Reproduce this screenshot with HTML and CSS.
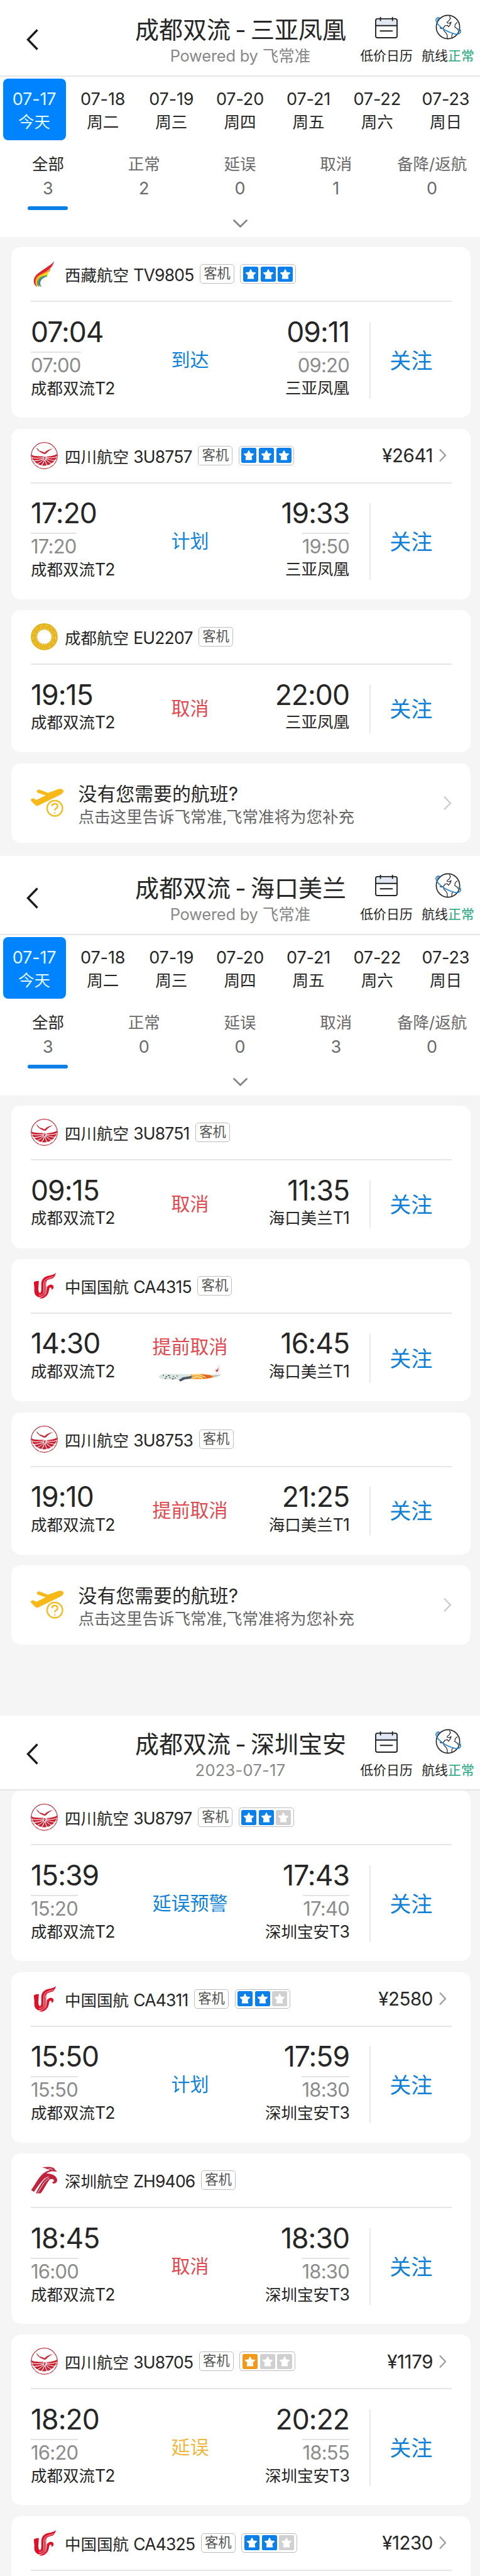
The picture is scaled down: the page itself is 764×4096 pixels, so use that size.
FILE: index.html
```html
<!DOCTYPE html>
<html lang="zh-CN">
<head>
<meta charset="utf-8">
<title>航班动态</title>
<link rel="stylesheet" href="styles.css">
</head>
<body>
<svg class="defs" aria-hidden="true">
  <symbol id="back" viewBox="0 0 20 34"><path d="M17.5 1.5 2.5 17l15 15.500" fill="none" stroke="#1c1c1c" stroke-width="3.400"/></symbol>
  <symbol id="down" viewBox="0 0 23 13"><path d="M1.500 1.500 11.500 11.300l10-9.800" fill="none" stroke="#868686" stroke-width="2.800" stroke-linecap="round"/></symbol>
  <symbol id="next" viewBox="0 0 13 22"><path d="M2 1.500 11 11 2 20.500" fill="none" stroke="currentColor" stroke-width="2.200"/></symbol>
  <symbol id="calendar" viewBox="0 0 152 144">
    <path d="M4 58V24Q4 12 16 12H136Q148 12 148 24V58Z" fill="#e2e8f3"/>
    <rect x="4" y="12" width="144" height="128" rx="12" fill="none" stroke="#222" stroke-width="8"/>
    <path d="M4 58H148M36 0V24M117 0V24M35 94H116" fill="none" stroke="#222" stroke-width="8" stroke-linecap="round"/>
  </symbol>
  <symbol id="globe" viewBox="0 0 176 168">
    <circle cx="86" cy="84" r="80" fill="#fff" stroke="#222" stroke-width="7"/>
    <path d="M96 10 104 26 98 30 94 40 82 48 80 56 98 58 108 50 100 70 90 82 82 72 64 76 54 92 38 94 30 88M54 92 58 108 74 126 80 138 82 162M112 160 112 140 122 124M150 52 136 64 132 84 150 96 156 108" fill="none" stroke="#222" stroke-width="5" stroke-linejoin="round"/>
    <path d="M26 20Q6 18 4 36C4 60 48 108 128 130Q166 138 172 116Q174 102 160 96" fill="none" stroke="#2583cf" stroke-width="7" stroke-linecap="round"/>
    <path d="M26 20Q16 24 14 42" fill="none" stroke="#2583cf" stroke-width="5"/>
  </symbol>
  <symbol id="star" viewBox="0 0 24 24"><rect width="24" height="24" rx="2.800" fill="currentColor"/><path d="m12 4.600 2.300 4.600 5.300.7-3.800 3.600.9 5.500H7.300l.9-5.500-3.800-3.600 5.300-.7Z" fill="#fff" stroke="#fff" stroke-width="1.200" stroke-linejoin="round"/></symbol>
  <symbol id="tibet" viewBox="0 0 140 176">
    <path d="M138 0C124 26 66 52 24 88C-6 116-4 152 20 172C8 132 20 110 58 86C96 66 130 42 138 0Z" fill="#dd2230"/>
    <path d="M116 50C86 74 48 82 24 104C6 124 8 152 24 174C20 136 36 112 76 92C98 80 110 70 116 50Z" fill="#f58220"/>
    <path d="M104 66C80 84 46 92 28 112C14 132 14 154 30 174C28 138 48 112 94 94C98 84 100 76 104 66Z" fill="#fbdc1c"/>
    <path d="M92 94C56 96 30 110 24 134C20 150 26 166 38 174C34 142 52 114 92 104Z" fill="#6aa64b"/>
    <path d="M88 102C52 104 34 124 32 146Q32 164 54 174C34 144 50 114 88 102Z" fill="#527c9c"/>
  </symbol>
  <symbol id="sichuan" viewBox="0 0 180 180">
    <circle cx="90" cy="90" r="87" fill="#fff" stroke="#bd2b3b" stroke-width="5"/>
    <path d="M3 84C26 98 60 92 92 96C124 96 154 92 177 80A88 88 0 0 1 3 84Z" fill="#cb1f30"/>
    <path d="M4 100Q46 114 92 98M10 124Q58 126 90 106M26 150Q66 140 88 112M56 170Q86 148 90 118M176 96Q136 112 98 98M170 122Q130 124 98 104M154 148Q120 140 98 110M124 170Q100 152 95 118" fill="none" stroke="#fff" stroke-width="4.500"/>
    <path d="M80 86Q96 78 102 96Q106 108 94 120" fill="none" stroke="#fff" stroke-width="5"/>
    <path d="M35 36Q50 46 58 58Q78 62 92 70Q110 48 150 42Q118 56 98 80Q86 80 78 74Q50 66 35 36Z" fill="#c72735"/>
  </symbol>
  <symbol id="chengdu" viewBox="0 0 180 180">
    <circle cx="90" cy="90" r="68" fill="none" stroke="#e5b41c" stroke-width="43"/>
    <circle cx="90" cy="90" r="76" fill="none" stroke="#f4d872" stroke-width="4" stroke-dasharray="22 14"/>
    <circle cx="90" cy="90" r="62" fill="none" stroke="#f6df8a" stroke-width="3" stroke-dasharray="14 12"/>
    <circle cx="90" cy="90" r="48" fill="none" stroke="#fff" stroke-width="10" stroke-dasharray="4 8"/>
  </symbol>
  <symbol id="airchina" viewBox="0 0 180 180">
    <path d="M168 4C158 38 142 46 118 50C104 56 102 68 102 84V128C98 168 64 178 42 160C24 150 22 130 24 106L20 66Q34 56 54 58L50 112Q52 138 62 138Q70 134 70 114V74C74 32 108 24 136 20Q156 16 168 4Z" fill="#de1027"/>
    <path d="M108 96Q132 70 150 90Q156 112 136 116Q144 100 128 102C118 112 124 142 102 160Q80 180 56 172Q94 166 104 136Z" fill="#de1027"/>
    <path d="M152 28C112 44 88 38 86 82V132Q78 156 54 152M142 42C106 52 96 56 95 92V136Q86 166 54 166" fill="none" stroke="#fff" stroke-width="3"/>
  </symbol>
  <symbol id="shenzhen" viewBox="0 0 180 180">
    <path d="M76 4C114 2 152-2 162 22L176 34Q158 32 140 30Q110 38 104 46C134 44 176 60 176 92Q172 116 146 112Q140 100 152 100C160 86 144 78 126 86C106 110 88 152 66 178H34C52 140 80 96 102 70C72 94 44 138 22 168L2 156C28 124 50 70 88 42Q108 28 128 24Q106 14 76 4Z" fill="#c3223c"/>
    <path d="M24 168C54 126 78 88 118 66M46 174C72 136 86 98 124 76M116 18Q134 8 146 22" fill="none" stroke="#fff" stroke-width="4"/>
  </symbol>
  <symbol id="plane" viewBox="0 0 106 92">
    <path d="M20 9Q20 2 28 3L56 14 88 2Q102-2 106 6Q108 13 96 20L26 54Q18 58 13 52L1 40Q-2 35 4 32Q10 31 18 37L48 22 21 13Z" fill="#f6b917"/>
    <circle cx="78" cy="64" r="25" fill="#fff" stroke="#f0bd25" stroke-width="5"/>
    <path d="M69 57Q69 49 78 49Q87 49 87 57Q87 62 81 65Q78 67 78 71M78 77V81" fill="none" stroke="#f0bd25" stroke-width="5"/>
  </symbol>
  <symbol id="livery" viewBox="0 0 430 112">
    <path d="M0 84Q10 60 50 60L210 62 350 64 430 64Q400 84 330 92L140 100Q20 100 0 84Z" fill="#dbe6e3"/>
    <path d="M222 62 300 60 368 72 376 84 330 94 256 98 216 92Z" fill="#f3a444"/>
    <path d="M286 64 352 70 370 84 306 92Z" fill="#e4601c"/>
    <path d="M228 66 276 64 320 84M236 88 262 78 300 88" stroke="#f6e08a" stroke-width="7" fill="none"/>
    <path d="M30 70h8M50 80h9M64 72h14M74 86h9M98 78h7M110 88h8M124 74h7M44 92h10M92 94h12" stroke="#4c5c66" stroke-width="7"/>
    <path d="M166 84 228 74 222 92 180 98 150 112 138 102Z" fill="#4b5966"/>
    <path d="M376 60 404 2 420 0 416 62Z" fill="#fdeff0"/>
    <path d="M388 28 396 36 408 16 404 42 392 48Z" fill="#c8354f"/>
    <path d="M364 72 430 66 380 84Z" fill="#b9c3bd"/>
  </symbol>
</svg>

<section class="screen">
  <header class="head">
    <svg class="back"><use href="#back"/></svg>
    <div class="heading"><h1>成都双流<i>-</i>三亚凤凰</h1><p><span class="pw">Powered by</span> 飞常准</p></div>
    <div class="actions"><div><svg class="cal"><use href="#calendar"/></svg><b>低价日历</b></div><div><svg class="globe"><use href="#globe"/></svg><b>航线<em>正常</em></b></div></div>
  </header>
  <nav class="dates"><div class="on"><span>07-17</span>今天</div><div><span>07-18</span>周二</div><div><span>07-19</span>周三</div><div><span>07-20</span>周四</div><div><span>07-21</span>周五</div><div><span>07-22</span>周六</div><div><span>07-23</span>周日</div></nav>
  <nav class="filters"><div class="on">全部<span>3</span></div><div>正常<span>2</span></div><div>延误<span>0</span></div><div>取消<span>1</span></div><div>备降/返航<span>0</span></div></nav>
  <div class="expand"><svg><use href="#down"/></svg></div>
  <main class="list">
    <article class="card">
      <div class="top"><svg class="logo tibet"><use href="#tibet"/></svg><span>西藏航空 <span class="n">TV9805</span></span><span class="tag">客机</span><span class="stars"><svg><use href="#star"/></svg><svg><use href="#star"/></svg><svg><use href="#star"/></svg></span></div>
      <div class="body"><div class="end"><time>07:04</time><s>07:00</s><p>成都双流<span class="n">T2</span></p></div><div class="state">到达</div><div class="end right"><time>09:11</time><s>09:20</s><p>三亚凤凰</p></div><div class="follow">关注</div></div>
    </article>
    <article class="card">
      <div class="top"><svg class="logo"><use href="#sichuan"/></svg><span>四川航空 <span class="n">3U8757</span></span><span class="tag">客机</span><span class="stars"><svg><use href="#star"/></svg><svg><use href="#star"/></svg><svg><use href="#star"/></svg></span><span class="price">¥2641<svg><use href="#next"/></svg></span></div>
      <div class="body"><div class="end"><time>17:20</time><s>17:20</s><p>成都双流<span class="n">T2</span></p></div><div class="state">计划</div><div class="end right"><time>19:33</time><s>19:50</s><p>三亚凤凰</p></div><div class="follow">关注</div></div>
    </article>
    <article class="card short">
      <div class="top"><svg class="logo"><use href="#chengdu"/></svg><span>成都航空 <span class="n">EU2207</span></span><span class="tag">客机</span></div>
      <div class="body"><div class="end"><time>19:15</time><p>成都双流<span class="n">T2</span></p></div><div class="state red">取消</div><div class="end right"><time>22:00</time><p>三亚凤凰</p></div><div class="follow">关注</div></div>
    </article>
    <article class="card notice"><svg class="plane"><use href="#plane"/></svg><div><h2>没有您需要的航班<span>?</span></h2><p>点击这里告诉飞常准<span>,</span>飞常准将为您补充</p></div><svg class="more"><use href="#next"/></svg></article>
  </main>
</section>

<section class="screen second">
  <header class="head">
    <svg class="back"><use href="#back"/></svg>
    <div class="heading"><h1>成都双流<i>-</i>海口美兰</h1><p><span class="pw">Powered by</span> 飞常准</p></div>
    <div class="actions"><div><svg class="cal"><use href="#calendar"/></svg><b>低价日历</b></div><div><svg class="globe"><use href="#globe"/></svg><b>航线<em>正常</em></b></div></div>
  </header>
  <nav class="dates"><div class="on"><span>07-17</span>今天</div><div><span>07-18</span>周二</div><div><span>07-19</span>周三</div><div><span>07-20</span>周四</div><div><span>07-21</span>周五</div><div><span>07-22</span>周六</div><div><span>07-23</span>周日</div></nav>
  <nav class="filters"><div class="on">全部<span>3</span></div><div>正常<span>0</span></div><div>延误<span>0</span></div><div>取消<span>3</span></div><div>备降/返航<span>0</span></div></nav>
  <div class="expand"><svg><use href="#down"/></svg></div>
  <main class="list">
    <article class="card short">
      <div class="top"><svg class="logo"><use href="#sichuan"/></svg><span>四川航空 <span class="n">3U8751</span></span><span class="tag">客机</span></div>
      <div class="body"><div class="end"><time>09:15</time><p>成都双流<span class="n">T2</span></p></div><div class="state red">取消</div><div class="end right"><time>11:35</time><p>海口美兰<span class="n">T1</span></p></div><div class="follow">关注</div></div>
    </article>
    <article class="card short">
      <div class="top"><svg class="logo"><use href="#airchina"/></svg><span>中国国航 <span class="n">CA4315</span></span><span class="tag">客机</span></div>
      <div class="body"><div class="end"><time>14:30</time><p>成都双流<span class="n">T2</span></p></div><div class="state red">提前取消<svg class="livery"><use href="#livery"/></svg></div><div class="end right"><time>16:45</time><p>海口美兰<span class="n">T1</span></p></div><div class="follow">关注</div></div>
    </article>
    <article class="card short">
      <div class="top"><svg class="logo"><use href="#sichuan"/></svg><span>四川航空 <span class="n">3U8753</span></span><span class="tag">客机</span></div>
      <div class="body"><div class="end"><time>19:10</time><p>成都双流<span class="n">T2</span></p></div><div class="state red">提前取消</div><div class="end right"><time>21:25</time><p>海口美兰<span class="n">T1</span></p></div><div class="follow">关注</div></div>
    </article>
    <article class="card notice"><svg class="plane"><use href="#plane"/></svg><div><h2>没有您需要的航班<span>?</span></h2><p>点击这里告诉飞常准<span>,</span>飞常准将为您补充</p></div><svg class="more"><use href="#next"/></svg></article>
  </main>
</section>

<section class="screen third">
  <header class="head">
    <svg class="back"><use href="#back"/></svg>
    <div class="heading"><h1>成都双流<i>-</i>深圳宝安</h1><p class="day">2023-07-17</p></div>
    <div class="actions"><div><svg class="cal"><use href="#calendar"/></svg><b>低价日历</b></div><div><svg class="globe"><use href="#globe"/></svg><b>航线<em>正常</em></b></div></div>
  </header>
  <main class="list">
    <article class="card">
      <div class="top"><svg class="logo"><use href="#sichuan"/></svg><span>四川航空 <span class="n">3U8797</span></span><span class="tag">客机</span><span class="stars"><svg><use href="#star"/></svg><svg><use href="#star"/></svg><svg class="off"><use href="#star"/></svg></span></div>
      <div class="body"><div class="end"><time>15:39</time><s>15:20</s><p>成都双流<span class="n">T2</span></p></div><div class="state">延误预警</div><div class="end right"><time>17:43</time><s>17:40</s><p>深圳宝安<span class="n">T3</span></p></div><div class="follow">关注</div></div>
    </article>
    <article class="card">
      <div class="top"><svg class="logo"><use href="#airchina"/></svg><span>中国国航 <span class="n">CA4311</span></span><span class="tag">客机</span><span class="stars"><svg><use href="#star"/></svg><svg><use href="#star"/></svg><svg class="off"><use href="#star"/></svg></span><span class="price">¥2580<svg><use href="#next"/></svg></span></div>
      <div class="body"><div class="end"><time>15:50</time><s>15:50</s><p>成都双流<span class="n">T2</span></p></div><div class="state">计划</div><div class="end right"><time>17:59</time><s>18:30</s><p>深圳宝安<span class="n">T3</span></p></div><div class="follow">关注</div></div>
    </article>
    <article class="card">
      <div class="top"><svg class="logo"><use href="#shenzhen"/></svg><span>深圳航空 <span class="n">ZH9406</span></span><span class="tag">客机</span></div>
      <div class="body"><div class="end"><time>18:45</time><s>16:00</s><p>成都双流<span class="n">T2</span></p></div><div class="state red">取消</div><div class="end right"><time>18:30</time><s>18:30</s><p>深圳宝安<span class="n">T3</span></p></div><div class="follow">关注</div></div>
    </article>
    <article class="card">
      <div class="top"><svg class="logo"><use href="#sichuan"/></svg><span>四川航空 <span class="n">3U8705</span></span><span class="tag">客机</span><span class="stars"><svg class="warn"><use href="#star"/></svg><svg class="off"><use href="#star"/></svg><svg class="off"><use href="#star"/></svg></span><span class="price">¥1179<svg><use href="#next"/></svg></span></div>
      <div class="body"><div class="end"><time>18:20</time><s>16:20</s><p>成都双流<span class="n">T2</span></p></div><div class="state amber">延误</div><div class="end right"><time>20:22</time><s>18:55</s><p>深圳宝安<span class="n">T3</span></p></div><div class="follow">关注</div></div>
    </article>
    <article class="card cut">
      <div class="top"><svg class="logo"><use href="#airchina"/></svg><span>中国国航 <span class="n">CA4325</span></span><span class="tag">客机</span><span class="stars"><svg><use href="#star"/></svg><svg><use href="#star"/></svg><svg class="off"><use href="#star"/></svg></span><span class="price">¥1230<svg><use href="#next"/></svg></span></div>
    </article>
  </main>
</section>
</body>
</html>
```
FILE: styles.css
```css
* { box-sizing: border-box; margin: 0; padding: 0; }
html, body { width: 764px; height: 4096px; overflow: hidden; }
body {
  background: #f5f5f5;
  color: #262626;
  font-family: "Inter", "Noto Sans CJK SC", sans-serif;
  font-size: 25.5px;
}
svg { display: block; flex: none; }
i, em, b { font-style: normal; font-weight: 400; }
h1, h2 { font-weight: 400; }
.defs { width: 0; height: 0; position: absolute; }
.n { letter-spacing: -0.03em; font-size: 26.5px; }

.screen { height: 1360.6px; }
.second { height: 1367.9px; }
.third { height: 1367.5px; overflow: hidden; }

/* header */
.head {
  display: grid;
  grid-template-columns: 215px 335px 1fr;
  height: 121.7px;
  background: #fff;
  border-bottom: 2px solid #e6e6e6;
}
.second .head { height: 126px; padding-top: 4.3px; }
.third .head { height: 119px; }
.third .head > * { margin-top: -2.2px; }
.back { width: 20px; height: 34px; margin: 46px 0 0 42px; }
.third .head .back { margin-top: 43.8px; }
.heading { padding-top: 22px; text-align: center; color: #888; white-space: nowrap; }
.heading h1 { height: 50px; line-height: 50px; font-size: 38px; color: #262626; }
.heading i { display: inline-block; width: 32px; }
.heading p { height: 34px; line-height: 34px; font-size: 25.5px; }
.pw { letter-spacing: -0.01em; }
.heading .day { letter-spacing: 0.01em; }
.actions { display: flex; gap: 14px; padding: 23px 0 0 23px; }
.actions > div { width: 84px; display: flex; flex-direction: column; align-items: center; }
.actions b { font-size: 20.9px; line-height: 30px; white-space: nowrap; }
.actions em { color: #23a67d; }
.cal { width: 36px; height: 34px; margin: 3.5px 0 13.5px; }
.globe { width: 41px; height: 40px; margin: 0 0 11px; }

/* date strip */
.dates { display: grid; grid-template-columns: repeat(7, 1fr); height: 102px; padding-top: 3.700px; background: #fff; }
.dates div {
  width: 100px; height: 98px; padding-top: 15px;
  justify-self: center; text-align: center; line-height: 36px;
}
.dates span { display: block; font-size: 27px; letter-spacing: -0.005em; }
.dates .on { background: #0083ff; color: #e4fbff; border-radius: 8px; }

/* status filters */
.filters { display: grid; grid-template-columns: repeat(5, 1fr); height: 111px; padding-top: 17.500px; background: #fff; color: #6a6a6a; }
.filters div { text-align: center; line-height: 39px; white-space: nowrap; }
.filters span { display: block; font-size: 27px; color: #6a6a6a; }
.filters .on { color: #262626; }
.filters .on::after { content: ""; display: block; width: 64px; height: 6px; margin: 8.500px auto 0; border-radius: 3px; background: #0c80e6; }
.expand { height: 42px; padding-top: 14.500px; background: #fff; }
.expand svg { width: 23px; height: 13px; margin: 0 auto; }

/* cards */
.list { display: flex; flex-direction: column; gap: 17.300px; padding: 16.800px 15px 0 17.500px; }
.third .list { padding-top: 0; }
.card { height: 271px; border-radius: 15px; background: #fff; padding: 0 30.500px 0 31.500px; }
.card.short { height: 226.300px; }
.card.notice { height: 126px; display: flex; }
.card.cut { height: 120px; }
.top { display: flex; align-items: center; height: 87px; border-bottom: 2px solid #e6e6e6; white-space: nowrap; }
.logo { width: 43px; height: 43px; margin-right: 11px; }
.logo.tibet { width: 42px; height: 42px; margin-right: 12px; }
.tag {
  height: 31px; width: 55px; margin-left: 9.500px; line-height: 27.500px; text-align: center;
  border: 1.500px solid #bdbdbd; border-radius: 5px; font-size: 21.300px; color: #555;
}
.stars { display: flex; align-items: center; gap: 3.700px; height: 31px; margin-left: 9.500px; padding: 0 3.500px; border: 1.500px solid #bdbdbd; border-radius: 5px; color: #0c80ea; }
.stars svg { width: 24px; height: 24px; }
.stars .off { color: #d0d0d0; }
.stars .warn { color: #f0991a; }
.price { display: flex; align-items: center; gap: 8.500px; margin-left: auto; padding-right: 8px; font-size: 29.500px; letter-spacing: -0.015em; }
.price svg { width: 13px; height: 22px; color: #9a9a9a; }

.body { display: grid; grid-template-columns: 173px 161px 173px 1fr; height: 122px; margin-top: 31.500px; }
.short .body { height: 76px; }
.end { display: flex; flex-direction: column; align-items: flex-start; white-space: nowrap; }
.right { align-items: flex-end; }
time { height: 32px; line-height: 32px; font-size: 44.500px; letter-spacing: -0.022em; }
.end s { height: 42px; margin-top: 15px; line-height: 40px; border-top: 2px solid #e3e3e3; text-decoration: none; font-size: 31px; letter-spacing: -0.025em; color: #8c8c8c; }
.end p { height: 34px; line-height: 34px; margin-top: -1px; }
.short .end p { margin-top: 10.500px; }
.state { display: flex; flex-direction: column; align-items: center; justify-content: center; padding-bottom: 2px; font-size: 30px; line-height: 42px; color: #0f82d8; white-space: nowrap; }
.red { color: #e04a50; }
.amber { color: #f0b840; }
.livery { width: 101px; height: 27px; margin-top: 8px; }
.follow { display: flex; align-items: center; justify-content: center; margin-left: 32px; padding-bottom: 3px; border-left: 2px solid #e8e8e8; font-size: 34px; color: #0f80d8; }

/* feedback card */
.plane { width: 52px; height: 45px; margin: 40px 23.500px 0 0; }
.notice > div { flex: 1; padding-top: 27px; white-space: nowrap; }
.notice h2 { height: 42px; line-height: 42px; font-size: 29.900px; }
.notice p { height: 32px; line-height: 32px; color: #666; }
.notice p span { display: inline-block; width: 6px; }
.more { width: 14px; height: 24px; margin-top: 51px; color: #c6cdd2; }
```
